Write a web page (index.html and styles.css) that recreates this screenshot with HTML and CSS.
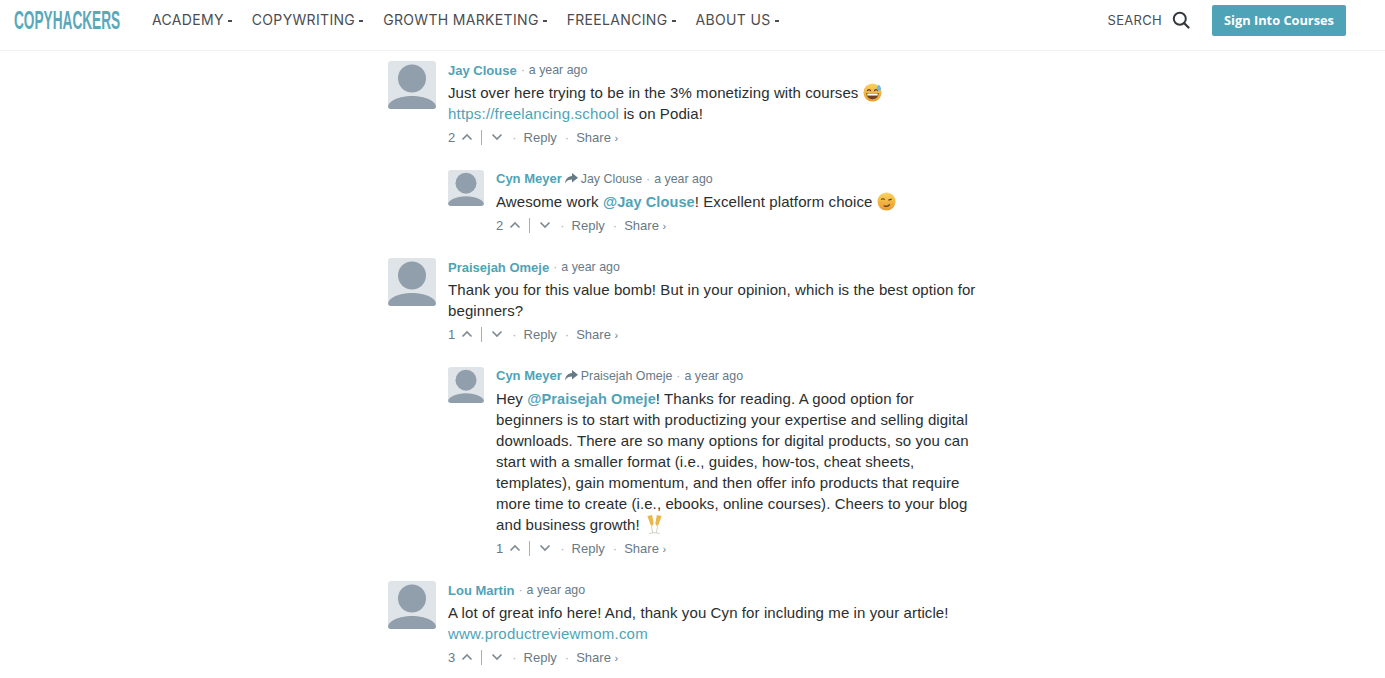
FILE: index.html
```html
<!DOCTYPE html>
<html lang="en">
<head>
  <meta charset="UTF-8" />
  <title>Copyhackers</title>
  <link rel="stylesheet" href="styles.css">
</head>
<body>

  <svg class="defs" width="0" height="0" aria-hidden="true">
    <defs>
      <linearGradient id="face" x1="0" y1="0" x2="0" y2="1">
        <stop offset="0" stop-color="#f9d35f"/>
        <stop offset="1" stop-color="#ea9a2e"/>
      </linearGradient>
    </defs>
    <symbol id="avatar" viewBox="0 0 48 48">
      <rect width="48" height="48" fill="#dfe4e8"/>
      <circle cx="24" cy="17.500" r="14" fill="#919eac"/>
      <path d="M0 48v-2c0-6 11-11 24-11s24 5 24 11v2z" fill="#919eac"/>
    </symbol>
    <symbol id="up" viewBox="0 0 12 8">
      <path d="M1.500 6.500 6 2l4.500 4.500" fill="none" stroke="#7f8b95" stroke-width="1.700"/>
    </symbol>
    <symbol id="down" viewBox="0 0 12 8">
      <path d="M1.500 1.500 6 6l4.500-4.500" fill="none" stroke="#7f8b95" stroke-width="1.700"/>
    </symbol>
    <symbol id="arrow" viewBox="0 0 13 11">
      <path d="M7 0l6 4.700L7 9.500V6.600C4 6.600 1.800 7.600 0 10.500.4 6 3 3.200 7 2.900z" fill="#687a86"/>
    </symbol>
  </svg>

  <!-- Navigation Bar -->
  <nav>
    <div class="logo"><span class="logo-text">COPYHACKERS</span></div>
    <div class="nav-links">
      <a href="#">ACADEMY<span class="caret"></span></a>
      <a href="#">COPYWRITING<span class="caret"></span></a>
      <a href="#">GROWTH MARKETING<span class="caret"></span></a>
      <a href="#">FREELANCING<span class="caret"></span></a>
      <a href="#">ABOUT US<span class="caret"></span></a>
    </div>
    <div class="nav-right">
      <span class="search-label">SEARCH</span>
      <svg class="search-icon" width="18" height="18" viewBox="0 0 18 18">
        <circle cx="7.800" cy="7.800" r="6" fill="none" stroke="#33383c" stroke-width="2"/>
        <path d="M12 12l4.500 4.500" stroke="#33383c" stroke-width="2.200" stroke-linecap="round"/>
      </svg>
      <a class="btn" href="#">Sign Into Courses</a>
    </div>
  </nav>

  <!-- Comments -->
  <div class="comments">

    <div class="comment">
      <svg class="avatar"><use href="#avatar"/></svg>
      <div class="comment-main">
        <div class="meta"><a class="author" href="#">Jay Clouse</a><span class="dot">·</span><span>a year ago</span></div>
        <div class="text">
          Just over here trying to be in the 3% monetizing with courses
          <svg class="emoji" viewBox="0 0 20 20">
            <circle cx="10" cy="10" r="9.500" fill="url(#face)"/>
            <path d="M3.500 10.500h13c0 4-3 6.500-6.500 6.500s-6.500-2.500-6.500-6.500z" fill="#6b4320"/>
            <path d="M4.500 11h11v2.200h-11z" fill="#fff"/>
            <path d="M4.500 8.500c.6-2 3-2 3.600 0M11.900 8.500c.6-2 3-2 3.600 0" fill="none" stroke="#5e3c1c" stroke-width="1.200"/>
            <path d="M16.500 1.500c1.500 2 2.500 3 2.500 4.300a2.300 2.300 0 0 1-4.600 0c0-1.300 1-2.300 2.100-4.300z" fill="#6db6e8"/>
          </svg><br>
          <a class="link" href="#">https://freelancing.school</a> is on Podia!
        </div>
        <div class="actions">
          <span>2</span><svg class="chev"><use href="#up"/></svg><span class="bar"></span><svg class="chev"><use href="#down"/></svg>
          <span class="dot">·</span><a href="#">Reply</a><span class="dot">·</span><a href="#">Share <span class="share-mark">›</span></a>
        </div>
      </div>
    </div>

    <div class="comment child">
      <svg class="avatar"><use href="#avatar"/></svg>
      <div class="comment-main">
        <div class="meta"><a class="author" href="#">Cyn Meyer</a><svg class="reply-arrow"><use href="#arrow"/></svg><span>Jay Clouse</span><span class="dot">·</span><span>a year ago</span></div>
        <div class="text">
          Awesome work <a class="mention" href="#">@Jay Clouse</a>! Excellent platform choice
          <svg class="emoji" viewBox="0 0 20 20">
            <circle cx="10" cy="10" r="9.500" fill="url(#face)"/>
            <path d="M4.500 8c1-1.200 2.500-1.200 3.500 0M12 8.500l3.500-1" fill="none" stroke="#5e3c1c" stroke-width="1.300"/>
            <path d="M7 14.500c2.500 1 5 .5 6.500-1.500" fill="none" stroke="#5e3c1c" stroke-width="1.300"/>
          </svg>
        </div>
        <div class="actions">
          <span>2</span><svg class="chev"><use href="#up"/></svg><span class="bar"></span><svg class="chev"><use href="#down"/></svg>
          <span class="dot">·</span><a href="#">Reply</a><span class="dot">·</span><a href="#">Share <span class="share-mark">›</span></a>
        </div>
      </div>
    </div>

    <div class="comment">
      <svg class="avatar"><use href="#avatar"/></svg>
      <div class="comment-main">
        <div class="meta"><a class="author" href="#">Praisejah Omeje</a><span class="dot">·</span><span>a year ago</span></div>
        <div class="text">
          Thank you for this value bomb! But in your opinion, which is the best option for<br>
          beginners?
        </div>
        <div class="actions">
          <span>1</span><svg class="chev"><use href="#up"/></svg><span class="bar"></span><svg class="chev"><use href="#down"/></svg>
          <span class="dot">·</span><a href="#">Reply</a><span class="dot">·</span><a href="#">Share <span class="share-mark">›</span></a>
        </div>
      </div>
    </div>

    <div class="comment child">
      <svg class="avatar"><use href="#avatar"/></svg>
      <div class="comment-main">
        <div class="meta"><a class="author" href="#">Cyn Meyer</a><svg class="reply-arrow"><use href="#arrow"/></svg><span>Praisejah Omeje</span><span class="dot">·</span><span>a year ago</span></div>
        <div class="text">
          Hey <a class="mention" href="#">@Praisejah Omeje</a>! Thanks for reading. A good option for<br>
          beginners is to start with productizing your expertise and selling digital<br>
          downloads. There are so many options for digital products, so you can<br>
          start with a smaller format (i.e., guides, how-tos, cheat sheets,<br>
          templates), gain momentum, and then offer info products that require<br>
          more time to create (i.e., ebooks, online courses). Cheers to your blog<br>
          and business growth!
          <svg class="emoji glasses" viewBox="0 0 20 20">
            <path d="M2.500 1 7.500 0 9 8c.2 1.300-.2 2.700-1.200 3.200-1 .1-1.900-.6-2.300-1.700z" fill="#eab84a"/>
            <path d="M12.500 0l5 1-3 8.500c-.4 1.100-1.300 1.800-2.300 1.700-1-.5-1.400-1.900-1.200-3.200z" fill="#eab84a"/>
            <path d="M6.700 11l1.300 7.500M4.500 19.500l6-1M13.300 11L12 18.500M9.500 18.500l6 1" stroke="#d4d4cc" stroke-width="1.100" fill="none"/>
          </svg>
        </div>
        <div class="actions">
          <span>1</span><svg class="chev"><use href="#up"/></svg><span class="bar"></span><svg class="chev"><use href="#down"/></svg>
          <span class="dot">·</span><a href="#">Reply</a><span class="dot">·</span><a href="#">Share <span class="share-mark">›</span></a>
        </div>
      </div>
    </div>

    <div class="comment">
      <svg class="avatar"><use href="#avatar"/></svg>
      <div class="comment-main">
        <div class="meta"><a class="author" href="#">Lou Martin</a><span class="dot">·</span><span>a year ago</span></div>
        <div class="text">
          A lot of great info here! And, thank you Cyn for including me in your article!<br>
          <a class="link" href="#">www.productreviewmom.com</a>
        </div>
        <div class="actions">
          <span>3</span><svg class="chev"><use href="#up"/></svg><span class="bar"></span><svg class="chev"><use href="#down"/></svg>
          <span class="dot">·</span><a href="#">Reply</a><span class="dot">·</span><a href="#">Share <span class="share-mark">›</span></a>
        </div>
      </div>
    </div>

  </div>

</body>
</html>
```

FILE: styles.css
```css
* {
  box-sizing: border-box;
  margin: 0;
  padding: 0;
}

html, body {
  height: 100%;
  overflow: hidden;
}

body {
  background: #ffffff;
  font-family: "Liberation Sans", Arial, sans-serif;
  color: #2a2e2e;
}

a {
  color: inherit;
  text-decoration: none;
}

.defs {
  position: absolute;
}

/* nav */
nav {
  display: flex;
  align-items: center;
  height: 51px;
  padding: 0 39px 10px 14px;
  border-bottom: 1px solid #eff1f2;
}

.logo {
  flex: none;
  width: 138px;
  overflow: hidden;
  white-space: nowrap;
}

.logo-text {
  display: inline-block;
  font-weight: 700;
  font-size: 26px;
  color: #5aa8ba;
  transform: scaleX(.525);
  transform-origin: left center;
}

.nav-links {
  display: flex;
  gap: 20px;
  margin-bottom: 2px;
  font-family: Inter, sans-serif;
  font-size: 14px;
  letter-spacing: .33px;
  color: #4a4d50;
}

.caret {
  display: inline-block;
  width: 4px;
  height: 2px;
  margin-left: 4px;
  vertical-align: 3px;
  background: #4a4d50;
}

.nav-right {
  display: flex;
  align-items: center;
  margin-left: auto;
}

.search-label {
  font-family: Inter, sans-serif;
  font-size: 13px;
  letter-spacing: .3px;
  color: #4a4d50;
}

.search-icon {
  margin: 0 22px 0 10px;
}

.btn {
  display: block;
  width: 134px;
  height: 31px;
  border-radius: 2px;
  background: #4fa3b6;
  color: #ffffff;
  font-family: "Open Sans", sans-serif;
  font-weight: 700;
  font-size: 12.800px;
  line-height: 31px;
  text-align: center;
}

/* comments */
.comments {
  width: 590px;
  margin-left: 388px;
  padding-top: 10px;
}

.comment {
  display: flex;
  gap: 12px;
  margin-bottom: 24px;
}

.comment.child {
  margin-left: 60px;
}

.avatar {
  flex: none;
  width: 48px;
  height: 48px;
  border-radius: 3px;
}

.child .avatar {
  width: 36px;
  height: 36px;
}

.meta {
  display: flex;
  align-items: center;
  height: 18px;
  font-size: 12.400px;
  color: #687a86;
}

.child .meta {
  height: 17px;
}

.author {
  font-size: 13px;
  font-weight: 700;
  color: #4fa3b6;
}

.dot {
  margin: 0 4px;
  color: #a5b2b9;
}

.reply-arrow {
  width: 13px;
  height: 11px;
  margin: 0 3px 0 3px;
}

.text {
  margin-top: 3px;
  font-size: 15px;
  line-height: 21px;
  letter-spacing: .1px;
  color: #2a2e2e;
}

.child .text {
  margin-top: 4px;
}

.link {
  letter-spacing: .2px;
  color: #4fa3b6;
}

.mention {
  font-size: 14.500px;
  line-height: 1;
  font-weight: 700;
  color: #4fa3b6;
}

.emoji {
  width: 19px;
  height: 19px;
  vertical-align: -4px;
}

.emoji.glasses {
  margin-left: 1px;
}

.actions {
  display: flex;
  align-items: center;
  height: 18px;
  margin-top: 4px;
  font-size: 13px;
  color: #687a86;
}

.chev {
  width: 12px;
  height: 8px;
  margin-left: 6px;
}

.bar {
  width: 1px;
  height: 15px;
  margin: 0 3px 0 8px;
  background: #a5b2b9;
}

.actions .dot {
  margin: 0 7px;
}

.actions .chev + .dot {
  margin-left: 9px;
}

.actions a + .dot {
  margin-left: 8px;
}

.share-mark {
  font-size: 11px;
}
```
